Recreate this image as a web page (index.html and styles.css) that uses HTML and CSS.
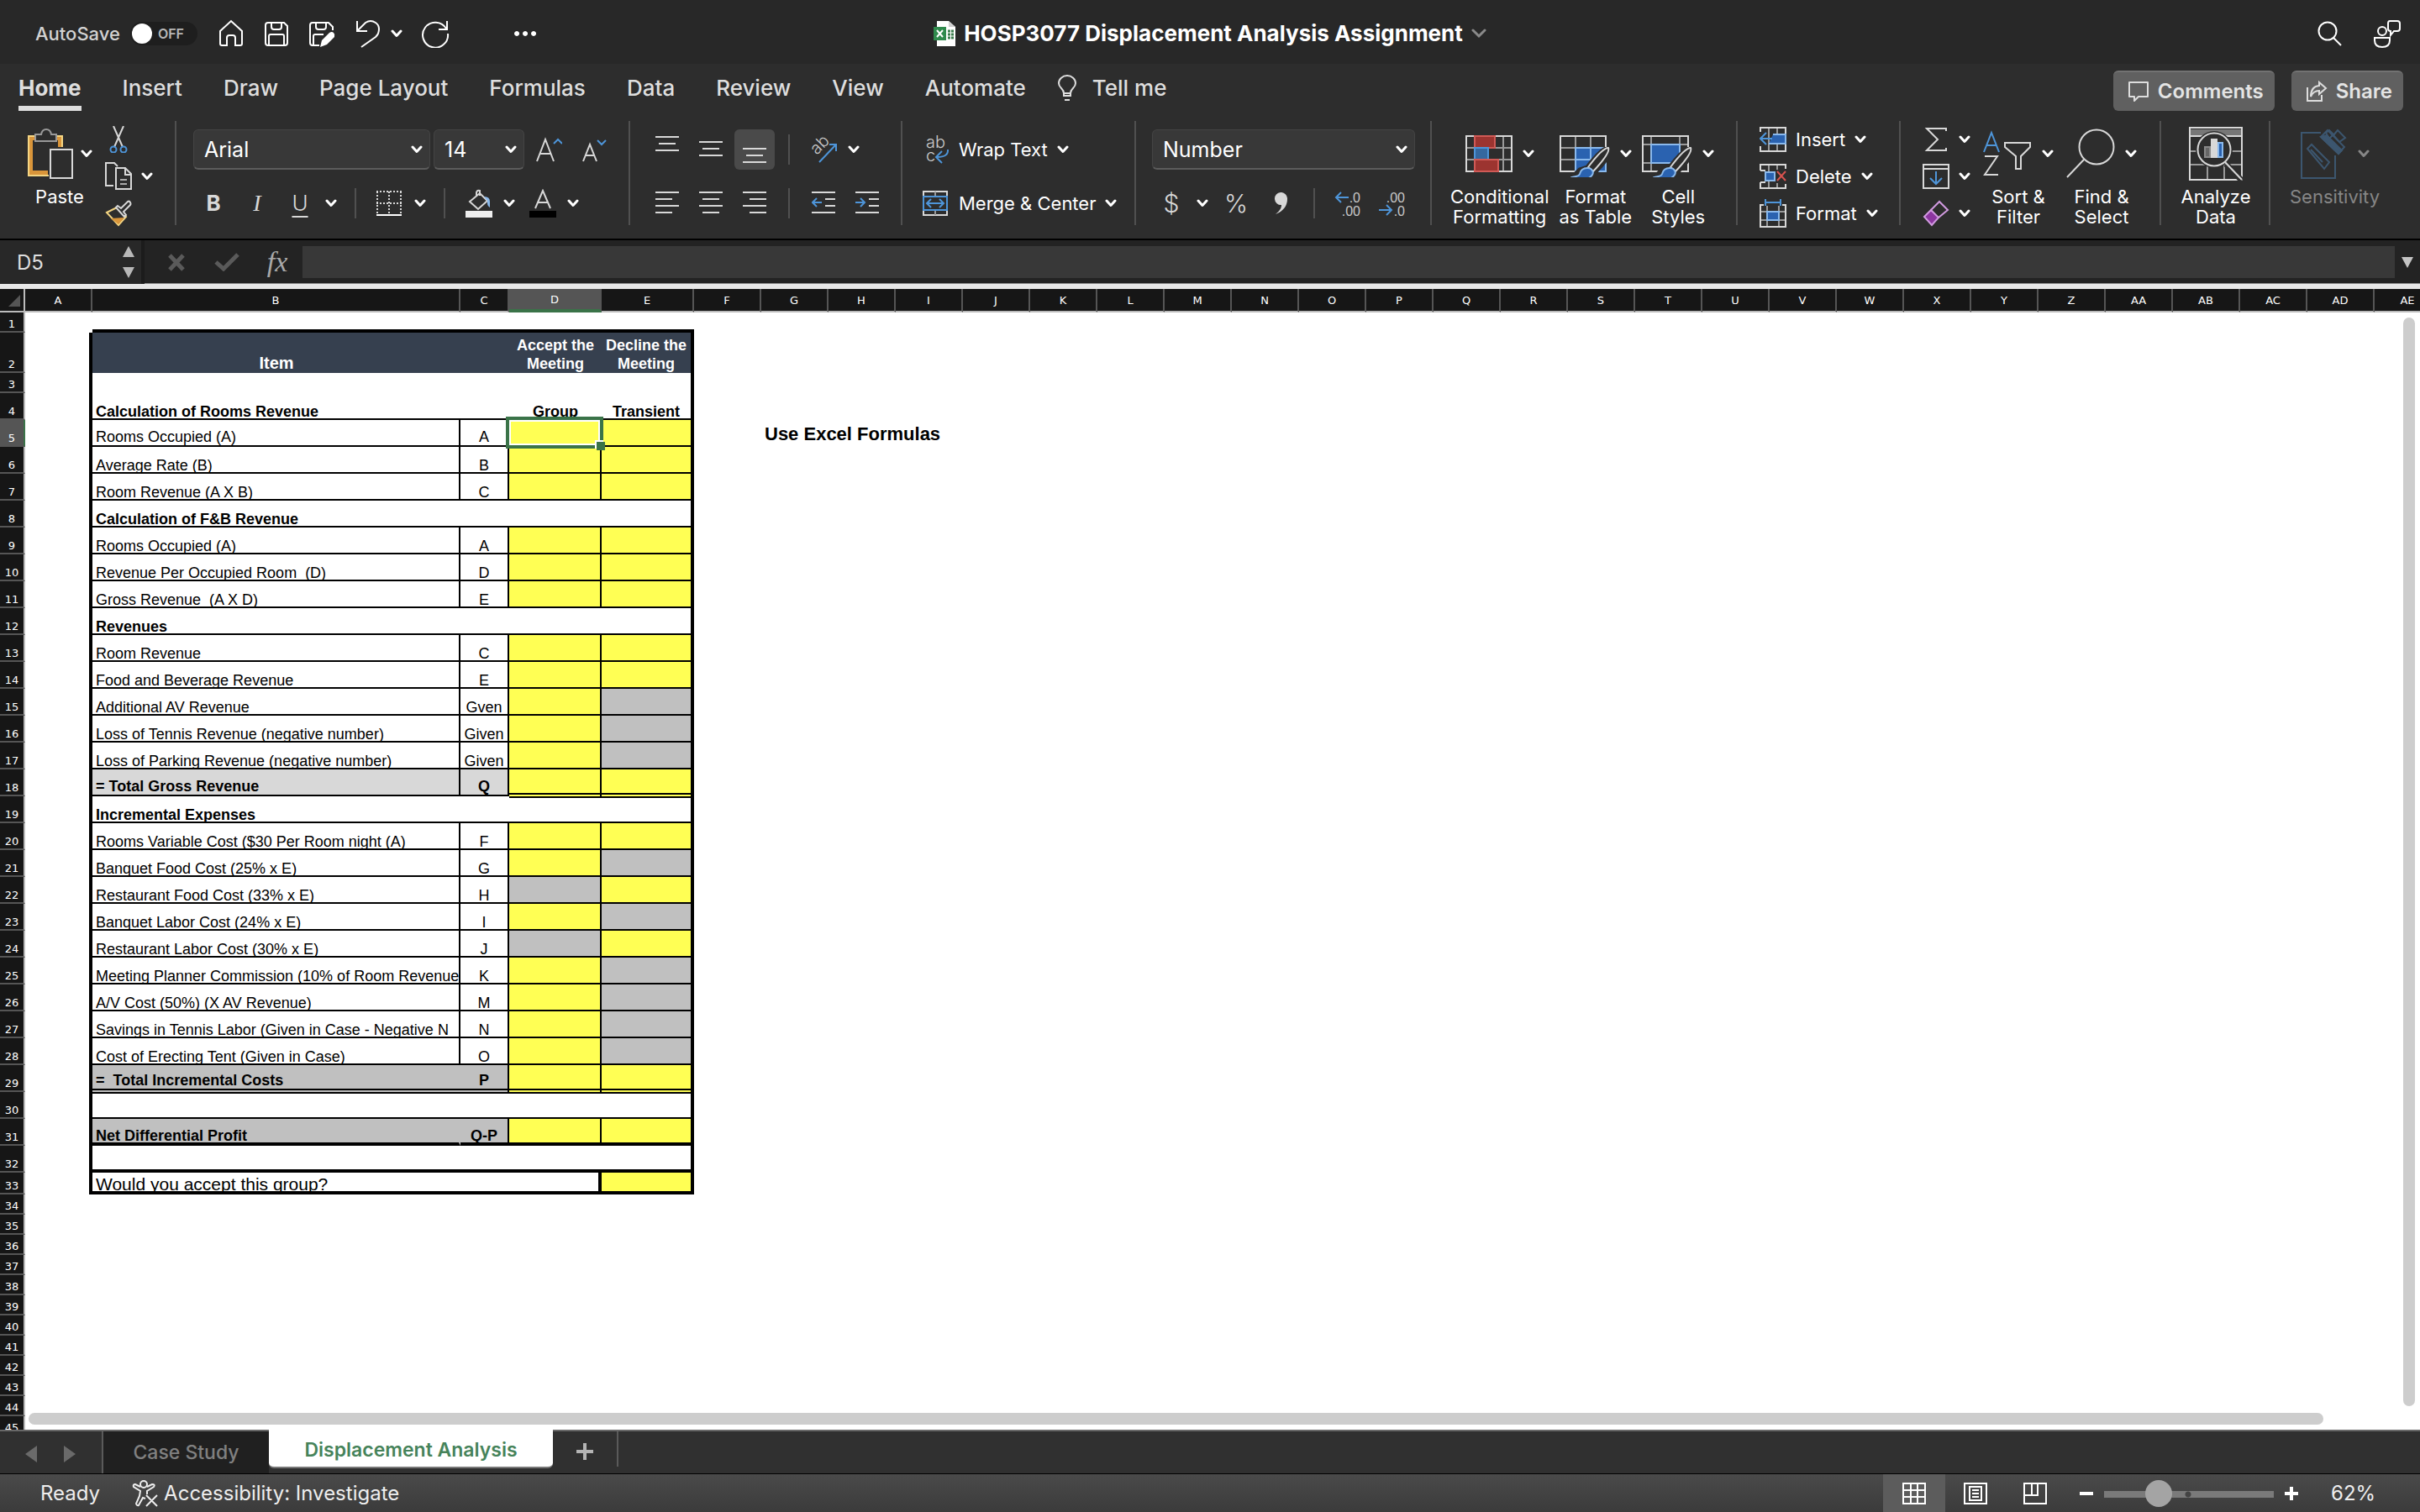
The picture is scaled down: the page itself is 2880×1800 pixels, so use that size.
FILE: index.html
```html
<!DOCTYPE html>
<html lang="en">
<head>
<meta charset="utf-8">
<title>HOSP3077 Displacement Analysis Assignment</title>
<link rel="stylesheet" href="styles.css">
</head>
<body>
<svg class="defs" aria-hidden="true">
  <symbol id="chev" viewBox="0 0 14 10"><path d="M2 2l5 5.500 5-5.500" fill="none" stroke="currentColor" stroke-width="3" stroke-linecap="round" stroke-linejoin="round"/></symbol>
  <symbol id="brush" viewBox="0 0 48 40">
    <path d="M45 1c-5 0-12 6-25 23l-9 3-9 9h22l8-9C42 17 47 8 46 2z" fill="#2d2d2d" stroke="#2d2d2d" stroke-width="5"/>
    <path d="M45 1c-4 0-12 7-24 23l6 5C41 14 47 5 45 1z" fill="#2d2d2d" stroke="#d8d8d8" stroke-width="2"/>
    <path d="M20 25c-5 0-8 3-9 7-1 3-4 3-9 4 4 3 12 4 18 2 6-3 8-7 6-10-1-2-3-3-6-3z" fill="#2a62b0" stroke="#8ab9ec" stroke-width="2"/>
  </symbol>
</svg>

<header class="titlebar">
  <div class="quick">
    <label class="autosave"><span>AutoSave</span><input type="checkbox" class="toggle"><span class="track"><i class="knob"></i>OFF</span></label>
    <button class="ic" aria-label="Home"><svg width="32" height="34" viewBox="0 0 32 34"><path d="M3 14L16 2l13 12v15q0 2-2 2h-6v-9q0-3-3-3h-4q-3 0-3 3v9H5q-2 0-2-2z"/></svg></button>
    <button class="ic" aria-label="Save"><svg width="32" height="34" viewBox="0 0 32 34"><path d="M6 4h19l4 4v20q0 3-3 3H6q-3 0-3-3V7q0-3 3-3zM10 4v5q0 3 3 3h6q3 0 3-3V4M7 31V20q0-2 2-2h14q2 0 2 2v11"/></svg></button>
    <button class="ic" aria-label="Save as"><svg width="32" height="34" viewBox="0 0 32 34"><path d="M13 31H5q-3 0-3-3V7q0-3 3-3h19l5 5v4M9 4v5q0 3 3 3h6q3 0 3-3V4M6 31V20q0-2 2-2h10"/><path class="solid" d="M14 33l2-8 9-9q3-2 5 0t1 5l-9 9z"/></svg></button>
    <button class="ic undo" aria-label="Undo"><svg width="32" height="34" viewBox="0 0 32 34"><path d="M4 2v12h12M4 14L14 4q6-4 12 0t3 13q-1 2-3 4L9 33"/></svg><svg class="chev" width="14" height="10"><use href="#chev"/></svg></button>
    <button class="ic" aria-label="Redo"><svg width="34" height="34" viewBox="0 0 34 34"><path d="M31 2v10H21M30 11a15 15 0 1 0 2 6"/></svg></button>
    <button class="ic more" aria-label="More"><svg width="28" height="8" viewBox="0 0 28 8"><path class="solid" d="M4 1a3 3 0 1 0 .1 0zM14 1a3 3 0 1 0 .1 0zM24 1a3 3 0 1 0 .1 0z"/></svg></button>
  </div>
  <button class="doc">
    <svg width="26" height="30" viewBox="0 0 26 30"><path d="M4 0h14l8 7v23H4z" fill="#fff"/><path d="M18 0l8 7h-8z" fill="#cfcfcf"/><rect x="0" y="7" width="15" height="16" fill="#2f8a4c"/><path d="M4 11l7 8M11 11l-7 8" stroke="#fff" stroke-width="2"/><path d="M17 12h7M17 16h7M17 20h7" stroke="#3b7d4d" stroke-width="3" stroke-dasharray="3 1"/></svg>
    <strong>HOSP3077 Displacement Analysis Assignment</strong>
    <svg class="chev dim" width="18" height="12" viewBox="0 0 18 12"><path d="M2 2l7 7 7-7" fill="none" stroke="currentColor" stroke-width="3" stroke-linecap="round"/></svg>
  </button>
  <div class="right">
    <button class="ic" aria-label="Search"><svg width="32" height="34" viewBox="0 0 32 34"><circle cx="13" cy="14" r="10.500"/><path d="M20 22l9 9"/></svg></button>
    <button class="ic" aria-label="Presence"><svg width="34" height="34" viewBox="0 0 34 34"><circle cx="11" cy="14" r="5"/><path d="M2 22h18v3q0 8-9 8t-9-8zM20 2h9q3 0 3 3v6q0 3-3 3h-4l-4 5v-5q-3 0-3-3V5q0-3 2-3z"/></svg></button>
  </div>
</header>

<nav class="tabs">
  <button class="tab on">Home</button><button class="tab">Insert</button><button class="tab">Draw</button><button class="tab">Page Layout</button><button class="tab">Formulas</button><button class="tab">Data</button><button class="tab">Review</button><button class="tab">View</button><button class="tab">Automate</button>
  <button class="tab tell"><svg width="24" height="32" viewBox="0 0 24 32" fill="none" stroke="#ddd" stroke-width="2"><path d="M8 22q0-3-3-6-3-3-3-6a10 9 0 0 1 20 0q0 3-3 6-3 3-3 6v3H8zM8 22h8M9 30h6"/></svg>Tell me</button>
  <div class="actions">
    <button class="act"><svg width="26" height="26" viewBox="0 0 26 26" fill="none" stroke="#ddd" stroke-width="2"><path d="M2 2h22v17H13l-5 5v-5H2z" stroke-linejoin="round"/></svg>Comments</button>
    <button class="act"><svg width="26" height="26" viewBox="0 0 26 26" fill="none" stroke="#ddd" stroke-width="2"><path d="M2 8v16h17v-7M16 2l8 7-8 7v-4q-7 0-10 7 0-12 10-13z"/></svg>Share</button>
  </div>
</nav>

<section class="ribbon">
  <div class="group g-clip">
    <button class="big paste"><span class="art"><svg width="56" height="62" viewBox="0 0 56 62"><path d="M1 9h42v14h-6V15H7v36h18v6H1z" fill="#d9953a"/><path d="M11 10H2v47h24M33 10h9v13" fill="none" stroke="#f4d583" stroke-width="2"/><path d="M10 16V8h7q1-6 6-6t6 6h6v8z" fill="#2d2d2d" stroke="#999" stroke-width="2"/><rect x="28" y="26" width="26" height="34" fill="#2d2d2d" stroke="#d8d8d8" stroke-width="2"/></svg><svg class="chev" width="14" height="10"><use href="#chev"/></svg></span>Paste</button>
    <div class="stack">
      <button class="row3" aria-label="Cut"><svg width="32" height="32" viewBox="0 0 32 32" fill="none" stroke="#d8d8d8" stroke-width="2"><path d="M10 0l11 25M22 0L11 25"/><circle cx="10" cy="28" r="3.500" stroke="#4e95d9"/><circle cx="22" cy="28" r="3.500" stroke="#4e95d9"/></svg></button>
      <button class="row3" aria-label="Copy"><svg width="32" height="34" viewBox="0 0 32 34" fill="none" stroke="#d8d8d8" stroke-width="2"><path d="M10 28H1V1h10l4 4M13 7h11l7 7v18H13zM24 7v8h7"/><path d="M18 21h8M18 26h8" stroke="#aaa"/></svg><svg class="chev" width="14" height="10"><use href="#chev"/></svg></button>
      <button class="row3" aria-label="Format painter"><svg width="32" height="32" viewBox="0 0 32 32" fill="none" stroke-width="2"><path d="M2 15l12-6 11 11-9 10z" stroke="#f4d583"/><path d="M7 22l16-1-7 8z" fill="#d9953a"/><path d="M13 9l2-2 4 3 8-8q2-1 3 1t0 3l-8 8 3 4-2 2z" stroke="#d8d8d8" fill="#2d2d2d"/></svg></button>
    </div>
  </div>

  <div class="group g-font">
    <div class="r r-font-a">
      <label class="combo" aria-label="Font"><select><option>Arial</option></select><svg class="chev" width="14" height="10"><use href="#chev"/></svg></label>
      <label class="combo" aria-label="Font size"><select><option>14</option></select><svg class="chev" width="14" height="10"><use href="#chev"/></svg></label>
      <button aria-label="Increase font size"><svg width="32" height="32" viewBox="0 0 32 32" fill="none" stroke="#d8d8d8" stroke-width="2"><path d="M2 30L12 4l10 26M6 21h12"/><path d="M22 9l5-5 5 5" stroke="#4e95d9"/></svg></button>
      <button aria-label="Decrease font size"><svg width="32" height="32" viewBox="0 0 32 32" fill="none" stroke="#d8d8d8" stroke-width="2"><path d="M3 30l8-20 8 20M6 23h10"/><path d="M20 5l5 5 5-5" stroke="#4e95d9"/></svg></button>
    </div>
    <div class="r r-font-b">
      <button class="glyph bold">B</button><button class="glyph ital">I</button><button class="glyph under">U</button><button aria-label="Underline options"><svg class="chev" width="14" height="10"><use href="#chev"/></svg></button><i class="vr"></i>
      <button aria-label="Borders"><svg width="30" height="32" viewBox="0 0 30 32" fill="none" stroke="#d8d8d8" stroke-width="2"><path d="M0 2h30M0 16h30M1 2v26M15 2v26M29 2v26" stroke-dasharray="2 2"/><path d="M0 30h30" stroke="#fff"/></svg></button><button aria-label="Border options"><svg class="chev" width="14" height="10"><use href="#chev"/></svg></button><i class="vr"></i>
      <button aria-label="Fill color"><svg width="34" height="34" viewBox="0 0 34 34"><path d="M6 15L18 5l9 9-11 10zM14 9V4q1-3 4-2v6" fill="none" stroke="#d8d8d8" stroke-width="2"/><path d="M23 9q7 0 7 6v7q-4-3-3-8z" fill="#8ab9ec"/><rect x="1" y="26" width="32" height="8" fill="#eee"/></svg></button><button aria-label="Fill options"><svg class="chev" width="14" height="10"><use href="#chev"/></svg></button>
      <button aria-label="Font color"><svg width="34" height="34" viewBox="0 0 34 34"><path d="M8 23l9-21 9 21M11 16h12" fill="none" stroke="#d8d8d8" stroke-width="2"/><rect x="1" y="26" width="32" height="8" fill="#000"/></svg></button><button aria-label="Font color options"><svg class="chev" width="14" height="10"><use href="#chev"/></svg></button>
    </div>
  </div>

  <div class="group g-align">
    <div class="r r-align-a">
      <button aria-label="Top align"><svg class="ln" width="28" height="36" viewBox="0 0 28 36"><path d="M0 3h28M4 11h20M0 19h28"/></svg></button>
      <button aria-label="Middle align"><svg class="ln" width="28" height="36" viewBox="0 0 28 36"><path d="M0 9h28M4 17h20M0 25h28"/></svg></button>
      <button class="sel" aria-label="Bottom align"><svg class="ln" width="28" height="36" viewBox="0 0 28 36"><path d="M0 17h28M4 25h20M0 33h28"/></svg></button>
      <i class="vr"></i>
      <button aria-label="Orientation"><svg width="32" height="34" viewBox="0 0 32 34"><text x="0" y="0" transform="translate(8 24) rotate(-45)" class="t22">ab</text><path d="M11 32L31 11M23 11h8v8" fill="none" stroke="#4e95d9" stroke-width="2"/></svg></button>
      <button aria-label="Orientation options"><svg class="chev" width="14" height="10"><use href="#chev"/></svg></button>
    </div>
    <div class="r r-align-b">
      <button aria-label="Align left"><svg class="ln" width="28" height="36" viewBox="0 0 28 36"><path d="M0 5h28M0 13h20M0 21h28M0 29h20"/></svg></button>
      <button aria-label="Center"><svg class="ln" width="28" height="36" viewBox="0 0 28 36"><path d="M0 5h28M4 13h20M0 21h28M4 29h20"/></svg></button>
      <button aria-label="Align right"><svg class="ln" width="28" height="36" viewBox="0 0 28 36"><path d="M0 5h28M8 13h20M0 21h28M8 29h20"/></svg></button>
      <i class="vr"></i>
      <button aria-label="Decrease indent"><svg class="ln" width="28" height="36" viewBox="0 0 28 36"><path d="M0 5h28M16 13h12M16 21h12M0 29h28"/><path d="M12 17H1M6 12l-5 5 5 5" stroke="#4e95d9"/></svg></button>
      <button aria-label="Increase indent"><svg class="ln" width="28" height="36" viewBox="0 0 28 36"><path d="M0 5h28M16 13h12M16 21h12M0 29h28"/><path d="M0 17h11M6 12l5 5-5 5" stroke="#4e95d9"/></svg></button>
    </div>
  </div>

  <div class="group g-wrap">
    <button class="r txt"><svg width="32" height="34" viewBox="0 0 32 34"><text x="4" y="15" class="t22">ab</text><text x="4" y="31" class="t22">c</text><path d="M30 17q1 9-13 9M23 19l-7 7 7 7" fill="none" stroke="#4e95d9" stroke-width="2"/></svg>Wrap Text<svg class="chev" width="14" height="10"><use href="#chev"/></svg></button>
    <button class="r txt"><svg width="32" height="32" viewBox="0 0 32 32" fill="none" stroke="#d8d8d8" stroke-width="2"><path d="M1 7V2h28v5M1 25v5h28v-5"/><path d="M15 2v5M15 25v5" stroke="#999"/><path d="M1 8h28v16H1zM5 16h20M10 11l-5 5 5 5M20 11l5 5-5 5" stroke="#4e95d9"/></svg>Merge &amp; Center<svg class="chev" width="14" height="10"><use href="#chev"/></svg></button>
  </div>

  <div class="group g-num">
    <label class="combo" aria-label="Number format"><select><option>Number</option></select><svg class="chev" width="14" height="10"><use href="#chev"/></svg></label>
    <div class="r r-num-b">
      <button class="glyph thin">$</button><button aria-label="Currency options"><svg class="chev" width="14" height="10"><use href="#chev"/></svg></button><button class="glyph thin">%</button><button aria-label="Comma style"><svg width="16" height="26" viewBox="0 0 16 26"><path d="M8 0a7.500 7.500 0 0 1 8 8c0 9-6 15-14 18 5-4 7-7 7-11a7.500 7.500 0 1 1-1-15z" fill="#d8d8d8"/></svg></button><i class="vr"></i>
      <button aria-label="Increase decimal"><svg width="32" height="34" viewBox="0 0 32 34"><text x="31" y="16" class="t18" text-anchor="end">.0</text><text x="31" y="32" class="t18" text-anchor="end">.00</text><path d="M17 10H2M8 4L2 10l6 6" fill="none" stroke="#4e95d9" stroke-width="2"/></svg></button>
      <button aria-label="Decrease decimal"><svg width="32" height="34" viewBox="0 0 32 34"><text x="31" y="16" class="t18" text-anchor="end">.00</text><text x="31" y="32" class="t18" text-anchor="end">.0</text><path d="M0 25h15M9 19l6 6-6 6" fill="none" stroke="#4e95d9" stroke-width="2"/></svg></button>
    </div>
  </div>

  <div class="group g-styles">
    <button class="big"><span class="art"><svg width="56" height="44" viewBox="0 0 56 44" fill="none" stroke-width="2"><path d="M1 15h54M1 29h54M11 1v42M45 1v42" stroke="#999"/><path d="M1 1h54v42H1z" stroke="#d8d8d8"/><path d="M11 1h24v14H11z" fill="#9c3430" stroke="#d05a56"/><path d="M11 15h16v14H11z" fill="#35689f" stroke="#4e95d9"/><path d="M11 29h28v14H11z" fill="#9c3430" stroke="#d05a56"/></svg><svg class="chev" width="14" height="10"><use href="#chev"/></svg></span>Conditional<br>Formatting</button>
    <button class="big"><span class="art"><svg width="60" height="56" viewBox="0 0 60 56" fill="none" stroke-width="2"><path d="M1 21h54M1 35h54M19 7v42M37 7v42" stroke="#999"/><path d="M1 7h54v42H1z" stroke="#d8d8d8"/><path d="M19 21h36v28H19z" fill="#2a62b0" stroke="#8ab9ec"/><path d="M37 21v28M19 35h36" stroke="#8ab9ec"/><use href="#brush" x="13" y="20" width="48" height="40"/></svg><svg class="chev" width="14" height="10"><use href="#chev"/></svg></span>Format<br>as Table</button>
    <button class="big"><span class="art"><svg width="60" height="56" viewBox="0 0 60 56" fill="none" stroke-width="2"><path d="M1 17h54M1 39h54M11 7v42M45 7v42" stroke="#999"/><path d="M1 7h54v42H1z" stroke="#d8d8d8"/><path d="M11 17h34v22H11z" fill="#2a62b0" stroke="#8ab9ec"/><use href="#brush" x="13" y="20" width="48" height="40"/></svg><svg class="chev" width="14" height="10"><use href="#chev"/></svg></span>Cell<br>Styles</button>
  </div>

  <div class="group g-cells">
    <button class="row3"><svg width="32" height="30" viewBox="0 0 32 30" fill="none" stroke-width="2"><path d="M11 1v28M21 1v28" stroke="#999"/><path d="M1 8V1h30v28H1v-7" stroke="#d8d8d8"/><path d="M16 9h15v11H11" fill="#2a62b0" stroke="#8ab9ec"/><path d="M0 6h8v17H0z" fill="#2d2d2d"/><path d="M15 14H1M8 7l-7 7 7 7" stroke="#4e95d9"/></svg>Insert<svg class="chev" width="14" height="10"><use href="#chev"/></svg></button>
    <button class="row3"><svg width="32" height="30" viewBox="0 0 32 30" fill="none" stroke-width="2"><path d="M11 1v28M21 1v28" stroke="#999"/><path d="M1 8V1h30v5M1 22v7h30v-5M1 8h6M1 22h6" stroke="#d8d8d8"/><path d="M7 10h11v10H7z" fill="#2a62b0" stroke="#8ab9ec"/><path d="M19 7h13v16H19z" fill="#2d2d2d"/><path d="M21 9l10 11M31 9L21 20" stroke="#d9534f"/></svg>Delete<svg class="chev" width="14" height="10"><use href="#chev"/></svg></button>
    <button class="row3"><svg width="32" height="34" viewBox="0 0 32 34" fill="none" stroke-width="2"><path d="M1 15h30M1 25h30M9 8v25M23 8v25" stroke="#999"/><path d="M5 7H1v26h30V7h-4" stroke="#d8d8d8"/><path d="M9 15h14v10H9z" fill="#2a62b0" stroke="#8ab9ec"/><path d="M7 0v8M25 0v8M7 4h18" stroke="#4e95d9"/></svg>Format<svg class="chev" width="14" height="10"><use href="#chev"/></svg></button>
  </div>

  <div class="group g-edit">
    <div class="stack">
      <button class="row3" aria-label="AutoSum"><svg width="32" height="30" viewBox="0 0 32 30" fill="none" stroke="#d8d8d8" stroke-width="2"><path d="M28 5V2H5l13 13L5 28h23v-3"/></svg><svg class="chev" width="14" height="10"><use href="#chev"/></svg></button>
      <button class="row3" aria-label="Fill"><svg width="32" height="30" viewBox="0 0 32 30" fill="none" stroke="#d8d8d8" stroke-width="2"><path d="M1 1h30v28H1zM1 6h30"/><path d="M16 9v15M9 17l7 7 7-7" stroke="#4e95d9"/></svg><svg class="chev" width="14" height="10"><use href="#chev"/></svg></button>
      <button class="row3" aria-label="Clear"><svg width="32" height="32" viewBox="0 0 32 32" fill="none" stroke="#d19ae0" stroke-width="2"><path d="M2 20l8-8 9 9-8 9z" fill="#8c36a0"/><path d="M10 12L20 2l10 10-11 9"/></svg><svg class="chev" width="14" height="10"><use href="#chev"/></svg></button>
    </div>
    <button class="big"><span class="art"><svg width="58" height="58" viewBox="0 0 58 58" fill="none" stroke="#d8d8d8" stroke-width="2"><path d="M1 27l9-23 9 23M4 19h12" stroke="#4e95d9"/><path d="M2 32h15L2 54h16M26 16h30v5L45 32v15h-6V32L26 21z"/></svg><svg class="chev" width="14" height="10"><use href="#chev"/></svg></span>Sort &amp;<br>Filter</button>
    <button class="big"><span class="art"><svg width="58" height="60" viewBox="0 0 58 60" fill="none" stroke="#d8d8d8" stroke-width="2"><circle cx="36" cy="22" r="20.500"/><path d="M21 37L1 58"/></svg><svg class="chev" width="14" height="10"><use href="#chev"/></svg></span>Find &amp;<br>Select</button>
  </div>

  <div class="group g-analyze">
    <button class="big"><span class="art"><svg width="64" height="64" viewBox="0 0 64 64" fill="none" stroke-width="2"><path d="M2 3h60v8H2z" fill="#777"/><path d="M2 29h60M2 45h60M22 46v17M42 46v17" stroke="#999"/><path d="M1 1h62v62H1zM1 11h62" stroke="#d8d8d8"/><circle cx="30" cy="27" r="22" fill="#2d2d2d"/><path d="M44 44l19 20" stroke="#2d2d2d" stroke-width="7"/><circle cx="30" cy="27" r="19.500" fill="#2d2d2d" stroke="#d8d8d8"/><path d="M43 42l20 21" stroke="#d8d8d8"/><path d="M19 24h6v12h-6z" fill="#666" stroke="#888"/><path d="M35 19h5v17h-5z" fill="#2a62b0" stroke="#8ab9ec"/><path d="M26 14h8v23h-8z" fill="#d8d8d8"/></svg></span>Analyze<br>Data</button>
  </div>

  <div class="group g-sens">
    <button class="big off"><span class="art"><svg width="56" height="60" viewBox="0 0 56 60" fill="none" stroke="#3c566f" stroke-width="2"><path d="M24 5H1v54h40V32M8 24l5-5 21 21-6 8zM12 25l14 15"/><path d="M32 2l20 20-7 8-21-20z"/><path d="M30 5l4-3 5 5-5 5zM39 8l5-6 9 9-7 5z"/><path d="M24 10l7-2 18 18-4 4z" fill="#3c566f"/></svg><svg class="chev" width="14" height="10"><use href="#chev"/></svg></span>Sensitivity</button>
  </div>
</section>

<section class="fbar">
  <div class="namebox"><input type="text" value="D5" aria-label="Name box"><svg width="14" height="38" viewBox="0 0 14 38"><path d="M0 13L7 0l7 13zM0 25h14L7 38z" fill="#b8b8b8"/></svg></div>
  <button aria-label="Cancel"><svg width="22" height="22" viewBox="0 0 22 22"><path d="M3 3l16 17M19 3L3 20" stroke="#5a5a5a" stroke-width="5"/></svg></button>
  <button aria-label="Enter"><svg width="30" height="22" viewBox="0 0 30 22"><path d="M2 11l9 8L28 2" fill="none" stroke="#5a5a5a" stroke-width="5"/></svg></button>
  <button class="fx">fx</button>
  <input class="formula" type="text" aria-label="Formula">
  <button class="expand" aria-label="Expand"><svg width="14" height="13" viewBox="0 0 14 13"><path d="M0 0h14L7 13z" fill="#c4c4c4"/></svg></button>
</section>

<main class="sheet">
<table>
  <colgroup><col class="c-h"><col class="c-a"><col class="c-b"><col class="c-c"><col class="c-d"><col class="c-d"><col class="c-a" span="26"></colgroup>
  <thead><tr>
    <th class="corner"><svg width="14" height="14" viewBox="0 0 14 14"><path d="M14 0v14H0z" fill="#555"/></svg></th>
    <th>A</th><th>B</th><th>C</th><th class="cur">D</th><th>E</th><th>F</th><th>G</th><th>H</th><th>I</th><th>J</th><th>K</th><th>L</th><th>M</th><th>N</th><th>O</th><th>P</th><th>Q</th><th>R</th><th>S</th><th>T</th><th>U</th><th>V</th><th>W</th><th>X</th><th>Y</th><th>Z</th><th>AA</th><th>AB</th><th>AC</th><th>AD</th><th>AE</th>
  </tr></thead>
  <tbody>
  <tr class="h24"><th>1</th><td></td><td class="bt" colspan="4"></td><td colspan="26"></td></tr>
  <tr class="h48 head"><th>2</th><td class="a"></td><td class="c"><div class="t20">Item</div></td><td></td><td class="c"><div class="two">Accept the<br>Meeting</div></td><td class="c e"><div class="two">Decline the<br>Meeting</div></td><td colspan="26"></td></tr>
  <tr class="h24"><th>3</th><td class="a"></td><td colspan="4" class="e"></td><td colspan="26"></td></tr>
  <tr class="sec last"><th>4</th><td class="a"></td><td><div>Calculation of Rooms Revenue</div></td><td></td><td class="c"><div>Group</div></td><td class="c e"><div>Transient</div></td><td colspan="26"></td></tr>
  <tr class="line five"><th class="cur">5</th><td class="a"></td><td><div>Rooms Occupied (A)</div></td><td class="c"><div>A</div></td><td class="y pick"><span class="ring"></span><span class="handle"></span></td><td class="y e"></td><td></td><td colspan="25" class="note"><div>Use Excel Formulas</div></td></tr>
  <tr class="line"><th>6</th><td class="a"></td><td><div>Average Rate (B)</div></td><td class="c"><div>B</div></td><td class="y"></td><td class="y e"></td><td colspan="26"></td></tr>
  <tr class="line"><th>7</th><td class="a"></td><td><div>Room Revenue (A X B)</div></td><td class="c"><div>C</div></td><td class="y"></td><td class="y e"></td><td colspan="26"></td></tr>
  <tr class="sec last"><th>8</th><td class="a"></td><td colspan="4" class="e"><div>Calculation of F&amp;B Revenue</div></td><td colspan="26"></td></tr>
  <tr class="line"><th>9</th><td class="a"></td><td><div>Rooms Occupied (A)</div></td><td class="c"><div>A</div></td><td class="y"></td><td class="y e"></td><td colspan="26"></td></tr>
  <tr class="line"><th>10</th><td class="a"></td><td><div>Revenue Per Occupied Room&nbsp; (D)</div></td><td class="c"><div>D</div></td><td class="y"></td><td class="y e"></td><td colspan="26"></td></tr>
  <tr class="line"><th>11</th><td class="a"></td><td><div>Gross Revenue&nbsp; (A X D)</div></td><td class="c"><div>E</div></td><td class="y"></td><td class="y e"></td><td colspan="26"></td></tr>
  <tr class="sec last"><th>12</th><td class="a"></td><td colspan="4" class="e"><div>Revenues</div></td><td colspan="26"></td></tr>
  <tr class="line"><th>13</th><td class="a"></td><td><div>Room Revenue</div></td><td class="c"><div>C</div></td><td class="y"></td><td class="y e"></td><td colspan="26"></td></tr>
  <tr class="line"><th>14</th><td class="a"></td><td><div>Food and Beverage Revenue</div></td><td class="c"><div>E</div></td><td class="y"></td><td class="y e"></td><td colspan="26"></td></tr>
  <tr class="line"><th>15</th><td class="a"></td><td><div>Additional AV Revenue</div></td><td class="c"><div>Gven</div></td><td class="y"></td><td class="g e"></td><td colspan="26"></td></tr>
  <tr class="line"><th>16</th><td class="a"></td><td><div>Loss of Tennis Revenue (negative number)</div></td><td class="c"><div>Given</div></td><td class="y"></td><td class="g e"></td><td colspan="26"></td></tr>
  <tr class="line"><th>17</th><td class="a"></td><td><div>Loss of Parking Revenue (negative number)</div></td><td class="c"><div>Given</div></td><td class="y"></td><td class="g e"></td><td colspan="26"></td></tr>
  <tr class="line total"><th>18</th><td class="a"></td><td class="lg"><div>= Total Gross Revenue</div></td><td class="lg c"><div>Q</div></td><td class="y dbl"></td><td class="y e dbl"></td><td colspan="26"></td></tr>
  <tr class="sec last"><th>19</th><td class="a"></td><td colspan="2"><div>Incremental Expenses</div></td><td colspan="2" class="e under-dbl"></td><td colspan="26"></td></tr>
  <tr class="line"><th>20</th><td class="a"></td><td><div>Rooms Variable Cost ($30 Per Room night (A)</div></td><td class="c"><div>F</div></td><td class="y"></td><td class="y e"></td><td colspan="26"></td></tr>
  <tr class="line"><th>21</th><td class="a"></td><td><div>Banquet Food Cost (25% x E)</div></td><td class="c"><div>G</div></td><td class="y"></td><td class="g e"></td><td colspan="26"></td></tr>
  <tr class="line"><th>22</th><td class="a"></td><td><div>Restaurant Food Cost (33% x E)</div></td><td class="c"><div>H</div></td><td class="g"></td><td class="y e"></td><td colspan="26"></td></tr>
  <tr class="line"><th>23</th><td class="a"></td><td><div>Banquet Labor Cost (24% x E)</div></td><td class="c"><div>I</div></td><td class="y"></td><td class="g e"></td><td colspan="26"></td></tr>
  <tr class="line"><th>24</th><td class="a"></td><td><div>Restaurant Labor Cost (30% x E)</div></td><td class="c"><div>J</div></td><td class="g"></td><td class="y e"></td><td colspan="26"></td></tr>
  <tr class="line"><th>25</th><td class="a"></td><td><div>Meeting Planner Commission (10% of Room Revenue</div></td><td class="c"><div>K</div></td><td class="y"></td><td class="g e"></td><td colspan="26"></td></tr>
  <tr class="line"><th>26</th><td class="a"></td><td><div>A/V Cost (50%) (X AV Revenue)</div></td><td class="c"><div>M</div></td><td class="y"></td><td class="g e"></td><td colspan="26"></td></tr>
  <tr class="line"><th>27</th><td class="a"></td><td><div>Savings in Tennis Labor (Given in Case - Negative N</div></td><td class="c"><div>N</div></td><td class="y"></td><td class="g e"></td><td colspan="26"></td></tr>
  <tr class="line"><th>28</th><td class="a"></td><td><div>Cost of Erecting Tent (Given in Case)</div></td><td class="c"><div>O</div></td><td class="y"></td><td class="g e"></td><td colspan="26"></td></tr>
  <tr class="line total"><th>29</th><td class="a"></td><td class="g dbl open"><div>=&nbsp; Total Incremental Costs</div></td><td class="g c dbl"><div>P</div></td><td class="y dbl"></td><td class="y e dbl"></td><td colspan="26"></td></tr>
  <tr class="last"><th>30</th><td class="a"></td><td colspan="4" class="e under-dbl"></td><td colspan="26"></td></tr>
  <tr class="line total thick"><th>31</th><td class="a"></td><td class="g open"><div>Net Differential Profit</div></td><td class="g c"><div>Q-P</div></td><td class="y"></td><td class="y e"></td><td colspan="26"></td></tr>
  <tr class="last thick"><th>32</th><td class="a"></td><td colspan="4" class="e"></td><td colspan="26"></td></tr>
  <tr class="h26 last thick"><th>33</th><td class="a"></td><td colspan="3" class="e"><div class="t20">Would you accept this group?</div></td><td class="y e"></td><td colspan="26"></td></tr>
  <tr class="h24"><th>34</th><td colspan="31"></td></tr>
  <tr class="h24"><th>35</th><td colspan="31"></td></tr>
  <tr class="h24"><th>36</th><td colspan="31"></td></tr>
  <tr class="h24"><th>37</th><td colspan="31"></td></tr>
  <tr class="h24"><th>38</th><td colspan="31"></td></tr>
  <tr class="h24"><th>39</th><td colspan="31"></td></tr>
  <tr class="h24"><th>40</th><td colspan="31"></td></tr>
  <tr class="h24"><th>41</th><td colspan="31"></td></tr>
  <tr class="h24"><th>42</th><td colspan="31"></td></tr>
  <tr class="h24"><th>43</th><td colspan="31"></td></tr>
  <tr class="h24"><th>44</th><td colspan="31"></td></tr>
  <tr class="h24"><th>45</th><td colspan="31"></td></tr>
  </tbody>
</table>
<div class="vscroll"></div>
<div class="hscroll"></div>
</main>

<nav class="sheets">
  <div class="arrows"><button aria-label="Previous sheet"><svg width="14" height="20" viewBox="0 0 14 20"><path d="M14 0v20L0 10z" fill="#6a6a6a"/></svg></button><button aria-label="Next sheet"><svg width="14" height="20" viewBox="0 0 14 20"><path d="M0 0v20l14-10z" fill="#6a6a6a"/></svg></button></div>
  <button class="st">Case Study</button>
  <button class="st active">Displacement Analysis</button>
  <button class="add" aria-label="Add sheet"><svg width="20" height="20" viewBox="0 0 20 20"><path d="M10 0v20M0 10h20" stroke="#b4b4b4" stroke-width="4"/></svg></button>
</nav>

<footer class="status">
  <span>Ready</span>
  <button class="acc"><svg width="32" height="32" viewBox="0 0 32 32" fill="none" stroke="#eee" stroke-width="2"><circle cx="14" cy="5" r="4"/><path d="M10 8L4 5q-3 0-2 3l8 5-1 6-4 9q1 3 3 2l5-9 3 1M18 8l6-3q4 0 2 3l-8 5v4M17 18l13 13M30 18L17 31"/></svg>Accessibility: Investigate</button>
  <div class="views">
    <button class="on" aria-label="Normal"><svg width="28" height="28" viewBox="0 0 28 28"><path d="M1 2h26v24H1zM1 10h26M1 18h26M10 2v24M18 2v24"/></svg></button>
    <button aria-label="Page layout"><svg width="28" height="28" viewBox="0 0 28 28"><path d="M1 2h26v24H1zM7 6h14v16H7zM10 10h8M10 14h8M10 18h8"/></svg></button>
    <button aria-label="Page break"><svg width="28" height="28" viewBox="0 0 28 28"><path d="M1 2h26v24H1zM1 16h16V2M10 2v14"/></svg></button>
  </div>
  <div class="zoom">
    <button aria-label="Zoom out"><svg width="18" height="18" viewBox="0 0 18 18"><path d="M1 9h16" stroke="#fff" stroke-width="4"/></svg></button>
    <input type="range" min="0" max="100" value="29" aria-label="Zoom">
    <button aria-label="Zoom in"><svg width="18" height="18" viewBox="0 0 18 18"><path d="M1 9h16M9 1v16" stroke="#fff" stroke-width="4"/></svg></button>
    <span class="pct">62%</span>
  </div>
</footer>
</body>
</html>
```
FILE: styles.css
```css
* { box-sizing: border-box; }
html, body { height: 100%; margin: 0; }
body { display: flex; flex-direction: column; background: #fff; color: #fff; font: 22px/24px Inter, "Liberation Sans", sans-serif; overflow: hidden; }
button, input, select { font: inherit; color: inherit; background: none; border: 0; padding: 0; margin: 0; outline: 0; }
svg { display: block; flex: none; }
.defs { position: absolute; width: 0; height: 0; }
.chev { color: #fff; }

/* title bar */
.titlebar { display: grid; grid-template-columns: 1fr auto 1fr; align-items: center; height: 76px; padding: 4px 22px 0; background: #282828; flex: none; }
.quick { display: flex; align-items: center; gap: 22px; padding-left: 20px; }
.autosave { display: flex; align-items: center; gap: 12px; color: #d2d2d2; font-size: 22px; font-weight: 500; margin-right: 2px; }
.toggle { position: absolute; opacity: 0; }
.track { display: flex; align-items: center; gap: 7px; width: 80px; height: 28px; border-radius: 14px; background: #1e1e1e; font-size: 16px; font-weight: 600; color: #b8b8b8; padding-left: 2px; }
.knob { width: 24px; height: 24px; border-radius: 50%; background: #fff; }
.ic svg:not(.chev) { fill: none; stroke: #fff; stroke-width: 2; }
.ic .solid { fill: #fff; stroke: none; }
.undo { display: flex; align-items: center; gap: 12px; }
.more { margin-left: 54px; }
.doc { display: flex; align-items: center; gap: 10px; font-size: 26px; line-height: 32px; }
.doc strong { font-weight: 700; }
.dim { color: #8a8a8a; }
.right { display: flex; justify-content: flex-end; gap: 35px; }

/* ribbon tabs */
.tabs { display: flex; align-items: flex-start; gap: 49px; height: 68px; padding: 8px 20px 0 22px; background: #2d2d2d; flex: none; font-size: 26px; font-weight: 500; color: #dedede; }
.tab { height: 48px; line-height: 42px; border-bottom: 6px solid transparent; white-space: nowrap; }
.tab.on { font-weight: 700; background: linear-gradient(#dedede, #dedede) 0 100% / 100% 6px no-repeat border-box; }
.tell { display: flex; align-items: center; gap: 18px; margin-left: -12px; }
.actions { display: flex; gap: 20px; margin-left: auto; }
.act { display: flex; align-items: center; justify-content: center; gap: 10px; height: 48px; padding: 0 13px 0 17px; border-radius: 6px; background: #606060; border-top: 2px solid #727272; font-size: 24px; font-weight: 600; color: #e4e4e4; }

/* ribbon body */
.ribbon { display: flex; height: 142px; background: #2d2d2d; border-bottom: 2px solid #000; flex: none; }
.group { display: flex; height: 140px; flex: none; background: linear-gradient(#505050, #505050) 100% 0 / 2px 124px no-repeat; }
.ribbon button { display: flex; align-items: center; justify-content: center; white-space: nowrap; }
.ribbon .big { display: block; align-self: flex-start; text-align: center; }
.art { display: flex; align-items: center; justify-content: center; gap: 12px; height: 78px; }
.stack { display: flex; flex-direction: column; }
.ribbon .row3 { height: 44px; justify-content: flex-start; gap: 11px; }
.g-clip { width: 210px; padding-left: 32px; gap: 15px; }
.paste .art { gap: 8px; }
.g-font { width: 540px; padding: 10px 0 0 20px; }
.g-font, .g-align, .g-wrap, .g-num { flex-direction: column; gap: 16px; }
.r { height: 48px; }
.r-font-a, .r-font-b, .r-align-a, .r-align-b, .r-num-b { display: grid; align-items: center; justify-items: center; }
.r-font-a { grid-template-columns: 286px 108px 58px 50px; justify-items: stretch; }
.r-font-a .combo:first-child { width: 282px; }
.r-font-b { grid-template-columns: 48px 56px 46px 28px 30px 50px 24px 34px 48px 24px 56px 16px; }
.vr { width: 2px; height: 36px; background: #505050; }
.glyph { font-size: 26px; color: #d8d8d8; }
.bold { font-weight: 700; }
.ital { font-family: "Liberation Serif", serif; font-style: italic; font-size: 28px; }
.under { text-decoration: underline; text-underline-offset: 6px; font-weight: 300; }
.thin { font-size: 30px; font-weight: 300; }
.combo { display: grid; align-items: center; height: 48px; border-radius: 6px; background: #383838; border: 1px solid #444; border-bottom: 2px solid #5c5c5c; }
.combo select { grid-area: 1 / 1; appearance: none; width: 100%; height: 45px; padding-left: 12px; font-size: 25px; }
.combo .chev { grid-area: 1 / 1; justify-self: end; margin-right: 8px; pointer-events: none; }
.g-align { width: 324px; padding: 10px 0 0 18px; }
.r-align-a { grid-template-columns: 52px 52px 52px 30px 52px 20px; }
.r-align-b { grid-template-columns: 52px 52px 52px 30px 52px 52px; }
.sel { width: 48px; height: 48px; border-radius: 6px; background: #4a4a4a; }
.ln { fill: none; stroke: #d8d8d8; stroke-width: 2; }
.t22 { font: 300 20px Inter, sans-serif; fill: #c8c8c8; }
.t18 { font: 300 16px "Liberation Sans", sans-serif; fill: #c8c8c8; }
.g-wrap { width: 278px; padding: 10px 0 0 24px; }
.ribbon .txt { justify-content: flex-start; gap: 11px; }
.g-num { width: 352px; padding: 10px 20px 0 19px; }
.r-num-b { grid-template-columns: 46px 28px 52px 54px 26px 54px 52px; }
.g-styles { width: 364px; padding-left: 22px; gap: 12px; }
.g-cells { width: 194px; padding-left: 26px; flex-direction: column; }
.g-edit { width: 310px; padding-left: 26px; gap: 15px; }
.g-analyze { width: 130px; justify-content: center; }
.g-sens { flex: 1 0 auto; padding-left: 23px; background: none; }
.off, .off .chev { color: #868686; }

/* formula bar */
.fbar { display: flex; align-items: center; height: 58px; padding-right: 8px; background: #232323; flex: none; border-bottom: 6px solid #e8e8e8; box-shadow: inset 0 -1px #8a8a8a; }
.namebox { display: flex; align-items: center; width: 172px; height: 100%; padding-right: 8px; background: #282828; border-right: 4px solid #1c1c1c; }
.namebox input { flex: 1; min-width: 0; padding-left: 20px; font-size: 24px; color: #dedede; }
.fbar > button { display: flex; justify-content: center; width: 60px; }
.fbar > button:nth-of-type(1) { margin-left: 8px; }
.fbar .fx { font: italic 34px/38px "Liberation Serif", serif; color: #a8a8a8; }
.formula { flex: 1; height: 38px; background: #383838; }
.fbar .expand { width: 14px; margin-left: 8px; }

/* worksheet */
.sheet { flex: 1; min-height: 0; position: relative; overflow: hidden; background: #fff; color: #000; }
table { table-layout: fixed; width: 1px; border-spacing: 0; font: 18px/24px "Liberation Sans", Arial, sans-serif; }
.c-h { width: 30px; } .c-a { width: 80px; } .c-b { width: 438px; } .c-c { width: 58px; } .c-d { width: 110px; }
th { background: #161616; color: #fff; font: 13px/16px "DejaVu Sans", sans-serif; padding: 0; }
thead th { height: 28px; padding-top: 2px; border-right: 2px solid #555; border-bottom: 2px solid #bbb; }
thead th.cur { background: #555; border-bottom: 4px solid #3a7348; }
.corner svg { margin-left: auto; margin-right: 4px; }
thead .corner, tbody th { border-right: 2px solid #bbb; }
tbody th { vertical-align: bottom; border-bottom: 2px solid #555; }
tbody th.cur { background: #555; border-right-color: #3a7348; }
tbody tr { height: 32px; }
tbody .h24 { height: 24px; } tbody .h26 { height: 26px; } tbody .h48 { height: 48px; }
td { padding: 0 0 0 4px; vertical-align: bottom; white-space: nowrap; }
td div { height: 20px; overflow: hidden; }
.a { border-right: 4px solid #000; }
.bt { border-bottom: 4px solid #000; }
.c { text-align: center; padding: 0; }
.a + td ~ .e, .a + .e { border-right: 4px solid #000; }
.head td:not(:last-child):not(.a) { background: #36404f; color: #fff; font-weight: 700; }
td .two { height: 44px; line-height: 22px; }
td .t20 { font-size: 20px; }
.head .t20 { height: 24px; }
.h26 .t20 { font-size: 21px; }
.sec { font-weight: 700; }
.last td:not(.a):not(:last-child), .line td:not(.a):not(:last-child) { border-bottom: 2px solid #000; }
.line td:nth-of-type(n+2):nth-of-type(-n+4) { border-right: 2px solid #000; }
.line td.open:not(.a):not(.e) { border-right-color: transparent; }
.total { font-weight: 700; }
.total div, .five div { height: 22px; }
.thick td:not(.a):not(:last-child) { border-bottom-width: 4px; }
.thick div { height: 20px; }
.y { background: #ffff54; } .g { background: #c0c0c0; } .lg { background: #d8d8d8; }
.line td.dbl:not(.a):not(:last-child) { border-bottom: 0; padding-bottom: 4px; background-image: linear-gradient(#000, #000); background-size: 100% 2px; background-repeat: no-repeat; background-position: 0 calc(100% - 2px); background-origin: border-box; }
.under-dbl { border-top: 2px solid #000; }
.line.five td:nth-of-type(5) ~ td { border: 0; }
.line .note div { font-size: 22px; font-weight: 700; height: 24px; }
.line .note { padding-bottom: 3px; }
.pick { position: relative; }
.ring { position: absolute; inset: -4px; border: 4px solid #3a7348; box-shadow: inset 0 0 0 2px #fff; z-index: 1; }
.handle { position: absolute; right: -6px; bottom: -6px; width: 10px; height: 10px; background: #3a7348; box-shadow: -2px -2px #fff; z-index: 2; }
.vscroll { position: absolute; right: 6px; top: 34px; bottom: 28px; width: 14px; border-radius: 7px; background: #cdcdcd; }
.hscroll { position: absolute; left: 34px; right: 115px; bottom: 6px; height: 14px; border-radius: 7px; background: #cdcdcd; }

/* sheet tabs */
.sheets { display: flex; height: 53px; background: #303030; border-top: 2px solid #686868; border-bottom: 1px solid #000; flex: none; font-size: 23px; font-weight: 500; }
.arrows { display: flex; align-items: center; gap: 32px; padding: 4px 0 0 30px; width: 121px; }
.st { width: 199px; background: #202020; color: #808080; border-left: 2px solid #5a5a5a; }
.st.active { width: 338px; height: 46px; margin-top: -2px; padding-top: 4px; background: #fff; color: #46835a; font-weight: 600; border: 0; border-bottom: 2px solid #777; border-radius: 0 0 6px 6px; }
.add { display: flex; align-items: center; justify-content: center; width: 78px; height: 42px; padding-top: 6px; border-right: 2px solid #5a5a5a; }

/* status bar */
.status { display: flex; align-items: center; height: 45px; padding: 0 54px 0 48px; background: linear-gradient(#4a4a4a, #3b3b3b); flex: none; font-size: 24px; color: #eee; }
.acc { display: flex; align-items: center; gap: 6px; margin-left: 38px; }
.views { display: flex; height: 45px; margin-left: auto; }
.views button { display: flex; align-items: center; justify-content: center; width: 71px; }
.views .on { width: 74px; background: #5c5c5c; }
.views svg { fill: none; stroke: #fff; stroke-width: 2; }
.zoom { display: flex; align-items: center; gap: 12px; margin-left: 17px; }
.zoom input { appearance: none; width: 202px; height: 32px; background: radial-gradient(circle at 100px 17px, #444 3px, transparent 4px), linear-gradient(#7a7a7a, #7a7a7a) 0 13px / 100% 8px no-repeat; }
.zoom input::-webkit-slider-thumb { appearance: none; width: 32px; height: 32px; border-radius: 50%; background: #a4a4a4; }
.pct { width: 52px; margin-left: 26px; white-space: nowrap; }
```
